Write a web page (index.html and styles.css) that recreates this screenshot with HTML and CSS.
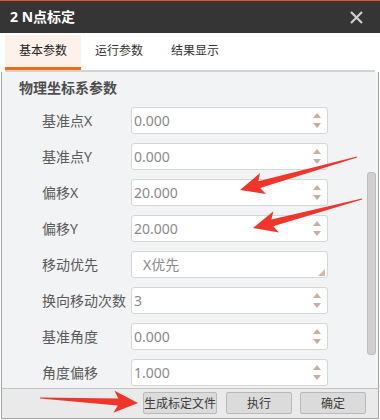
FILE: index.html
```html
<!DOCTYPE html>
<html lang="zh-CN">
<head>
    <meta charset="UTF-8">
    <meta name="viewport" content="width=device-width, initial-scale=1.0">
    <title>2 N点标定</title>
    <link rel="stylesheet" href="styles.css">
</head>
<body>
    <div class="window">
        <div class="titlebar">
            <span class="title">2 N点标定</span>
            <svg class="close" width="13" height="13" viewBox="0 0 13 13">
                <path d="M1 1 L12 12 M12 1 L1 12" stroke="#cfcfcf" stroke-width="2.2" fill="none"/>
            </svg>
        </div>

        <div class="tabs">
            <div class="tabstrip">
                <div class="tab active">基本参数</div>
                <div class="tab">运行参数</div>
                <div class="tab">结果显示</div>
            </div>
        </div>

        <div class="body">
            <div class="form">
                <div class="section">物理坐标系参数</div>

                <div class="row">
                    <label>基准点X</label>
                    <div class="field"><span class="value">0.000</span><span class="arrows"><i class="up"></i><i class="down"></i></span></div>
                </div>
                <div class="row">
                    <label>基准点Y</label>
                    <div class="field"><span class="value">0.000</span><span class="arrows"><i class="up"></i><i class="down"></i></span></div>
                </div>
                <div class="row">
                    <label>偏移X</label>
                    <div class="field"><span class="value">20.000</span><span class="arrows"><i class="up"></i><i class="down"></i></span></div>
                </div>
                <div class="row">
                    <label>偏移Y</label>
                    <div class="field"><span class="value">20.000</span><span class="arrows"><i class="up"></i><i class="down"></i></span></div>
                </div>
                <div class="row">
                    <label>移动优先</label>
                    <div class="field select"><span class="value">X优先</span></div>
                </div>
                <div class="row">
                    <label>换向移动次数</label>
                    <div class="field"><span class="value">3</span><span class="arrows"><i class="up"></i><i class="down"></i></span></div>
                </div>
                <div class="row">
                    <label>基准角度</label>
                    <div class="field"><span class="value">0.000</span><span class="arrows"><i class="up"></i><i class="down"></i></span></div>
                </div>
                <div class="row">
                    <label>角度偏移</label>
                    <div class="field"><span class="value">1.000</span><span class="arrows"><i class="up"></i><i class="down"></i></span></div>
                </div>
            </div>
            <div class="scrollbar"><div class="thumb"></div></div>
        </div>

        <div class="footer">
            <button class="btn btn-wide">生成标定文件</button>
            <button class="btn">执行</button>
            <button class="btn">确定</button>
        </div>

        <!-- red annotation arrows drawn over the dialog -->
        <svg class="marks" width="380" height="420" viewBox="0 0 380 420">
            <polygon points="356.9,156.5 258.3,181.2 260.1,172.9 240,190 266.1,194.1 260.2,188 357.1,157.5"/>
            <polygon points="361.9,198.5 271.4,219.5 273.4,211.2 253,228 279,232.4 273.2,226.3 362.1,199.5"/>
            <polygon points="40,397.4 118.2,398.5 114.6,390.8 138,403 113.4,412.8 117.8,405.5 40,398.6"/>
        </svg>
    </div>
</body>
</html>
```

FILE: styles.css
```css
body {
    margin: 0;
    font-family: "Noto Sans", "Noto Sans CJK SC", sans-serif;
    background-color: #fff;
}
.window {
    position: relative;
    width: 380px;
    height: 420px;
    overflow: hidden;
    background-color: #fff;
}
.titlebar {
    height: 33px;
    box-sizing: border-box;
    border-top: 1px solid #e9501f;
    background-color: #353535;
    display: flex;
    align-items: center;
    justify-content: space-between;
    padding: 0 17px 0 10px;
}
.title {
    color: #fff;
    font-weight: bold;
    font-size: 14px;
    line-height: 20px;
}
.tabs {
    padding: 2px 5px 0;
    background-color: #fff;
}
.tabstrip {
    display: flex;
    border-bottom: 2px solid #d2d2d2;
}
.tab {
    width: 76px;
    height: 32px;
    line-height: 32px;
    text-align: center;
    font-size: 12px;
    color: #333;
    border-bottom: 3px solid transparent;
}
.tab.active {
    background-color: #fdf1ea;
    border-bottom-color: #f06a12;
    color: #222;
}
.body {
    display: flex;
    height: 316px;
    margin: 0 1px;
    border-left: 1px solid #a4a4a4;
    border-right: 1px solid #a4a4a4;
    background-color: #f2f3f5;
    overflow: hidden;
}
.form {
    flex: 1;
    padding-top: 6px;
}
.section {
    padding-left: 17px;
    font-size: 14px;
    font-weight: bold;
    line-height: 20px;
    color: #4e4e4e;
    margin-bottom: 9px;
}
.row {
    display: flex;
    align-items: center;
    height: 27px;
    margin-bottom: 9px;
    padding-left: 40px;
}
.row label {
    width: 89px;
    font-size: 14px;
    line-height: 20px;
    color: #5a5a5a;
    white-space: nowrap;
}
.field {
    position: relative;
    width: 197px;
    height: 27px;
    box-sizing: border-box;
    border: 1px solid #d6d6d6;
    border-radius: 3px;
    background-color: #fff;
    display: flex;
    align-items: center;
    padding-left: 2px;
}
.value {
    flex: 1;
    font-size: 14px;
    line-height: 20px;
    color: #8a8a8a;
}
.arrows {
    display: flex;
    flex-direction: column;
    gap: 5px;
    margin-right: 6px;
}
.arrows i {
    display: block;
    width: 0;
    height: 0;
    border-left: 4px solid transparent;
    border-right: 4px solid transparent;
}
.arrows .up {
    border-bottom: 5px solid #cbae9e;
}
.arrows .down {
    border-top: 5px solid #cbae9e;
}
.select {
    padding-left: 11px;
}
.select::after {
    content: "";
    position: absolute;
    right: 2px;
    bottom: 1px;
    width: 0;
    height: 0;
    border-left: 7px solid transparent;
    border-bottom: 7px solid #d4b7a4;
}
.scrollbar {
    width: 12px;
    padding-top: 100px;
}
.thumb {
    width: 9px;
    height: 183px;
    box-sizing: border-box;
    margin-left: 1px;
    background-color: #d2d0ce;
    border: 1px solid #bdbdbd;
    border-radius: 3px;
}
.footer {
    display: flex;
    gap: 8px;
    height: 29px;
    margin: 0 1px;
    padding: 3px 0 0 141px;
    box-sizing: border-box;
    border: 1px solid #a4a4a4;
    border-top-color: #c4c4c4;
    background-color: #eaeaea;
    height: 31px;
}
.btn {
    width: 66px;
    height: 22px;
    padding: 0;
    font-family: "Noto Sans", "Noto Sans CJK SC", sans-serif;
    font-size: 12px;
    color: #3a3a3a;
    background-color: #dbdbdb;
    border: 1px solid #b9b9b9;
    border-radius: 2px;
}
.btn-wide {
    width: 74px;
    margin-right: 1px;
}
.marks {
    position: absolute;
    top: 0;
    left: 0;
    pointer-events: none;
}
.marks polygon {
    fill: #f2352b;
}
```
